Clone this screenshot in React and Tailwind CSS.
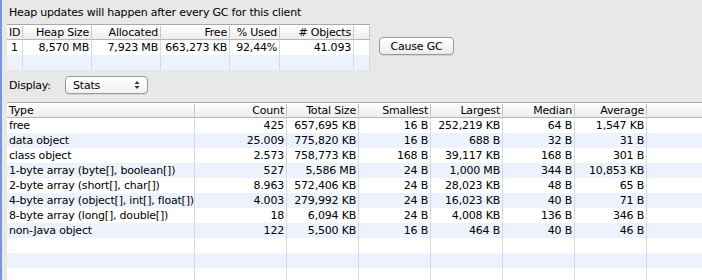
import React from "react";

const topCols = [
  { h: "ID", w: "w-[16px]", ha: "justify-start pl-[1px]", da: "justify-center" },
  { h: "Heap Size", w: "w-[69px]", ha: "justify-end", da: "justify-end" },
  { h: "Allocated", w: "w-[69px]", ha: "justify-end", da: "justify-end" },
  { h: "Free", w: "w-[69px]", ha: "justify-end", da: "justify-end" },
  { h: "% Used", w: "w-[50px]", ha: "justify-end", da: "justify-end" },
  { h: "# Objects", w: "w-[74px]", ha: "justify-end", da: "justify-end" },
  { h: "", w: "w-[16px]", ha: "justify-end", da: "justify-end" },
];
const topRows = [
  ["1", "8,570 MB", "7,923 MB", "663,273 KB", "92,44%", "41.093", ""],
  ["", "", "", "", "", "", ""],
];

const botCols = [
  { h: "Type", w: "w-[188px]", ha: "justify-start", da: "justify-start" },
  { h: "Count", w: "w-[92px]", ha: "justify-end", da: "justify-end" },
  { h: "Total Size", w: "w-[72px]", ha: "justify-end", da: "justify-end" },
  { h: "Smallest", w: "w-[72px]", ha: "justify-end", da: "justify-end" },
  { h: "Largest", w: "w-[72px]", ha: "justify-end", da: "justify-end" },
  { h: "Median", w: "w-[72px]", ha: "justify-end", da: "justify-end" },
  { h: "Average", w: "w-[72px]", ha: "justify-end", da: "justify-end" },
  { h: "", w: "flex-1", ha: "justify-end", da: "justify-end", last: true },
];
const botRows = [
  ["free", "425", "657,695 KB", "16 B", "252,219 KB", "64 B", "1,547 KB", ""],
  ["data object", "25.009", "775,820 KB", "16 B", "688 B", "32 B", "31 B", ""],
  ["class object", "2.573", "758,773 KB", "168 B", "39,117 KB", "168 B", "301 B", ""],
  ["1-byte array (byte[], boolean[])", "527", "5,586 MB", "24 B", "1,000 MB", "344 B", "10,853 KB", ""],
  ["2-byte array (short[], char[])", "8.963", "572,406 KB", "24 B", "28,023 KB", "48 B", "65 B", ""],
  ["4-byte array (object[], int[], float[])", "4.003", "279,992 KB", "24 B", "16,023 KB", "40 B", "71 B", ""],
  ["8-byte array (long[], double[])", "18", "6,094 KB", "24 B", "4,008 KB", "136 B", "346 B", ""],
  ["non-Java object", "122", "5,500 KB", "16 B", "464 B", "40 B", "46 B", ""],
  ["", "", "", "", "", "", "", ""],
  ["", "", "", "", "", "", "", ""],
  ["", "", "", "", "", "", "", ""],
];

function HeaderRow({ cols }) {
  return (
    <div className="flex h-[15px] border-b border-[#b5b5b5] bg-gradient-to-b from-[#ffffff] to-[#ededed]">
      {cols.map((c, i) => (
        <div key={i} className={`${c.w} flex items-center shrink-0`}>
          <div className={`flex-1 flex ${c.ha} pl-[2px] pr-[2px] whitespace-nowrap overflow-hidden`}>{c.h}</div>
          {!c.last && <div className="w-px h-[12px] bg-[#c4c4c4]" />}
        </div>
      ))}
    </div>
  );
}

function BodyRow({ cols, row, idx }) {
  return (
    <div className={`flex h-[15px] ${idx % 2 === 1 ? "bg-[#edf3fe]" : "bg-white"}`}>
      {cols.map((c, i) => (
        <div
          key={i}
          className={`${c.w} shrink-0 flex items-center ${c.da} ${c.last ? "" : "border-r border-[#d9d9d9]"} pl-[2px] pr-[2px] whitespace-nowrap overflow-hidden`}
        >
          {row[i]}
        </div>
      ))}
    </div>
  );
}

export default function App() {
  return (
    <div className="w-[702px] h-[280px] overflow-hidden flex bg-[#e8e8e8] text-black font-['DejaVu_Sans',sans-serif] text-[11px] leading-[15px] tracking-[-0.2px]">
      <div className="w-[2px] bg-[#7598dc] shrink-0" />
      <div className="flex-1 flex flex-col pl-[5px] min-w-0">
        <div className="h-[24px] flex items-center pl-[2px]">
          Heap updates will happen after every GC for this client
        </div>
        <div className="flex items-start">
          <div className="w-[363px] border-t border-[#a8a8a8] bg-white">
            <HeaderRow cols={topCols} />
            {topRows.map((r, i) => (
              <BodyRow key={i} cols={topCols} row={r} idx={i} />
            ))}
          </div>
          <button className="ml-[9px] mt-[13px] w-[75px] h-[18px] rounded-[4px] border border-[#9a9a9a] bg-gradient-to-b from-[#ffffff] to-[#ececec] shadow-[0_1px_0_rgba(0,0,0,0.08)] flex items-center justify-center text-[11px] leading-[15px]">
            Cause GC
          </button>
        </div>
        <div className="h-[32px] flex items-start pt-[6px] pl-[2px]">
          <div className="w-[56px] h-[18px] flex items-center">Display:</div>
          <div className="w-[83px] h-[18px] rounded-[4px] border border-[#9a9a9a] bg-gradient-to-b from-[#ffffff] to-[#f1f1f1] shadow-[0_1px_0_rgba(0,0,0,0.08)] flex items-center pl-[7px] pr-[7px]">
            <span className="flex-1">Stats</span>
            <svg width="6" height="10" viewBox="0 0 6 10">
              <path d="M3 1 L5.5 4 L0.5 4 Z" fill="#333" />
              <path d="M3 9 L5.5 6 L0.5 6 Z" fill="#333" />
            </svg>
          </div>
        </div>
        <div className="flex-1 border-t border-[#a8a8a8] bg-white overflow-hidden">
          <HeaderRow cols={botCols} />
          {botRows.map((r, i) => (
            <BodyRow key={i} cols={botCols} row={r} idx={i} />
          ))}
        </div>
      </div>
    </div>
  );
}
